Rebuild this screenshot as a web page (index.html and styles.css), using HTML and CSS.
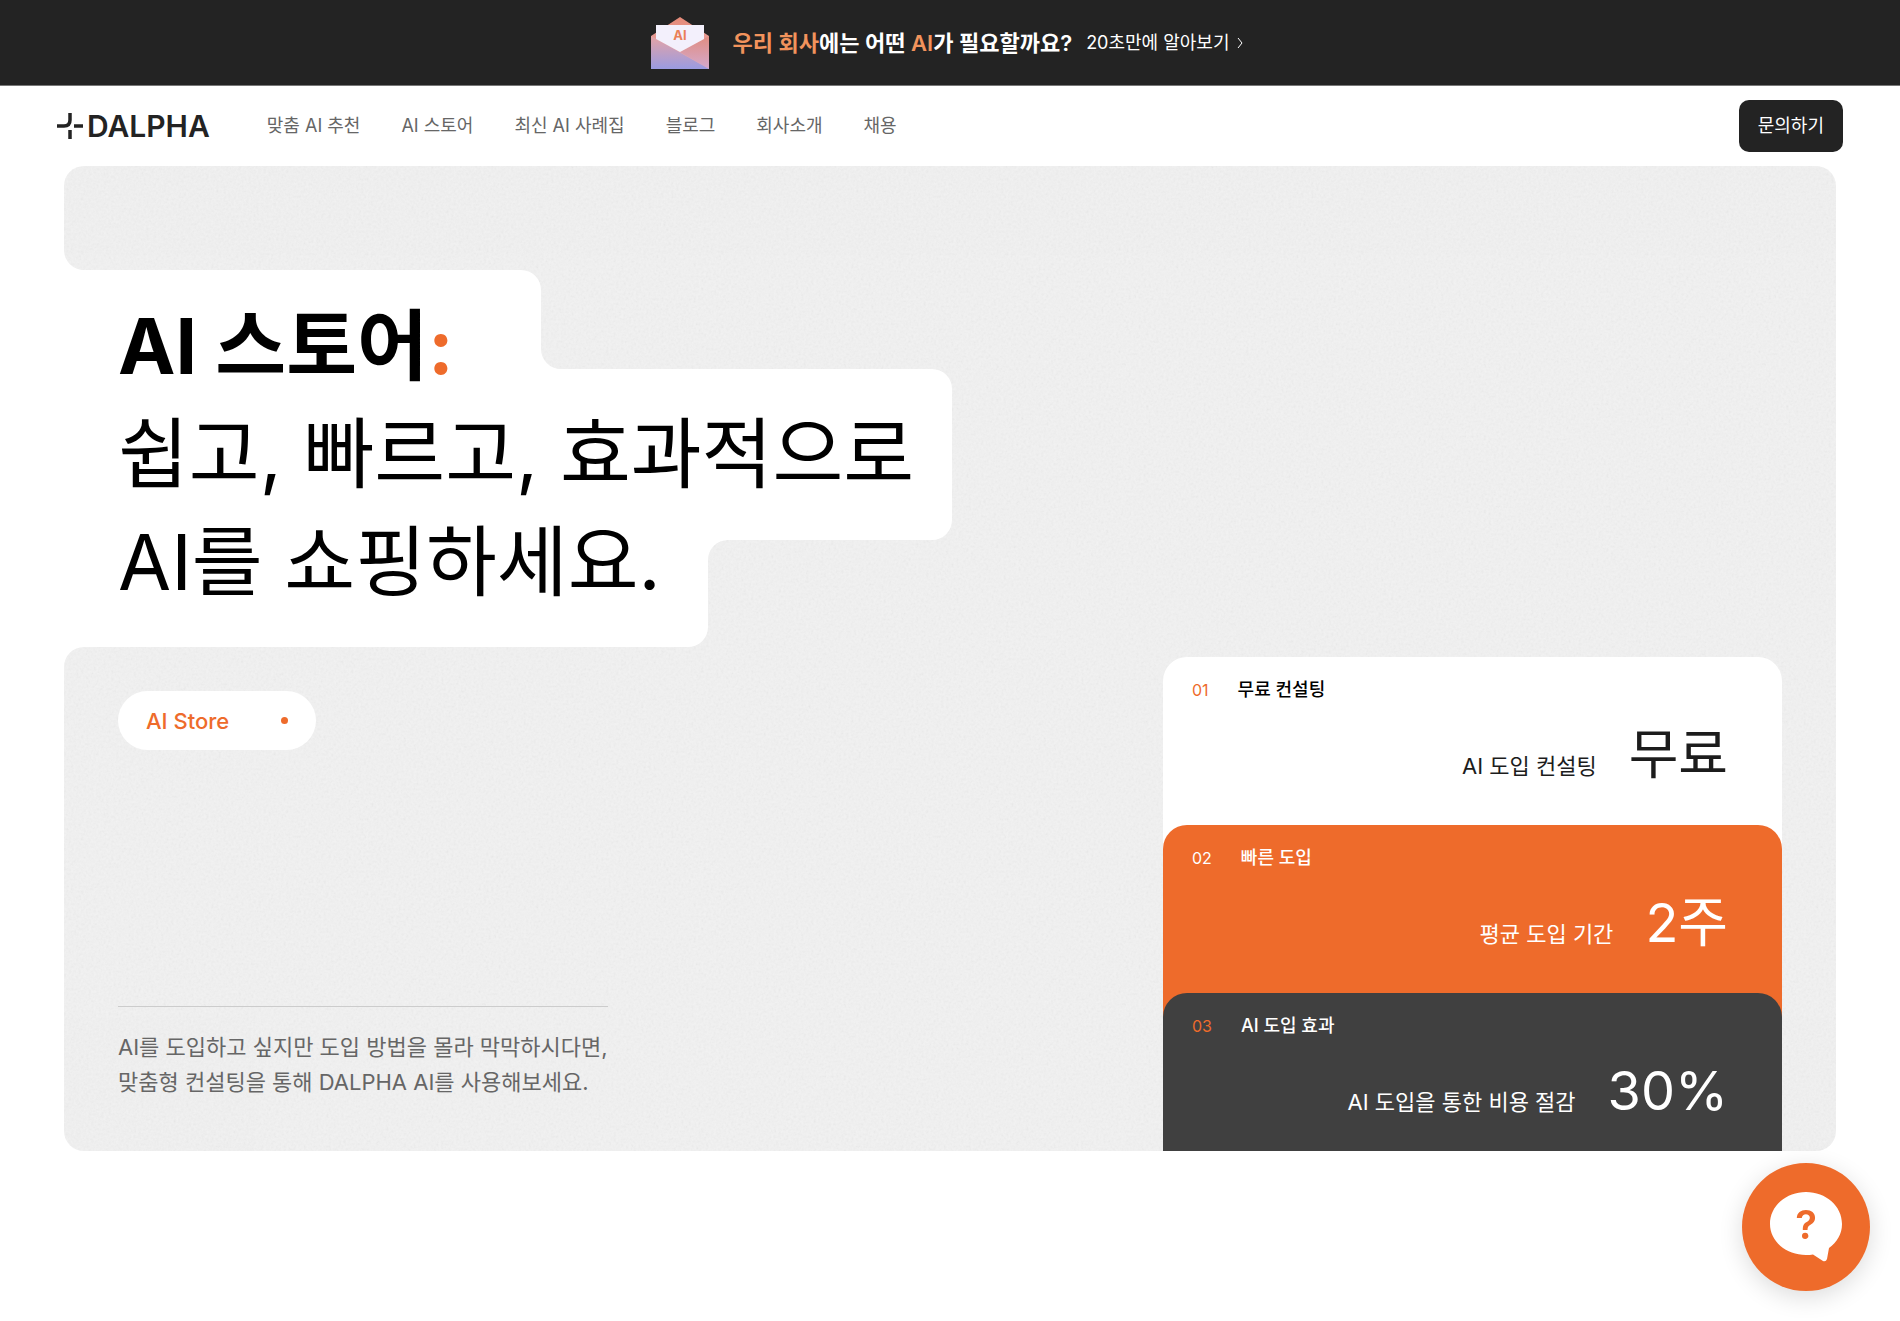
FILE: index.html
```html
<!DOCTYPE html>
<html lang="ko">
<head>
  <meta charset="utf-8">
  <meta name="viewport" content="width=device-width, initial-scale=1">
  <title>DALPHA | AI 스토어</title>
  <link rel="stylesheet" href="styles.css">
</head>
<body>
  <a class="banner" href="#recommend">
    <svg class="banner-icon" viewBox="0 0 58 52" aria-hidden="true">
      <defs>
        <linearGradient id="flap" x1="0" y1="0" x2="0" y2="1">
          <stop offset="0" stop-color="#e58a78"/><stop offset="1" stop-color="#e9b3bd"/>
        </linearGradient>
        <linearGradient id="front" x1="0" y1="0" x2="0" y2="1">
          <stop offset="0" stop-color="#e6a3a4"/><stop offset="1" stop-color="#9a9be2"/>
        </linearGradient>
        <linearGradient id="side" x1="0" y1="0" x2="0" y2="1">
          <stop offset="0" stop-color="#e08c80"/><stop offset="1" stop-color="#d5aacd"/>
        </linearGradient>
      </defs>
      <path d="M29 0 58 19V52H0V19Z" fill="url(#flap)"/>
      <path d="M58 19V52L29 35Z" fill="url(#side)"/>
      <path d="M0 19 58 52H0Z" fill="url(#front)"/>
      <path d="M5 8H53V22L29 35 5 22Z" fill="#f3f0fc"/>
      <text x="29" y="23" text-anchor="middle" class="banner-icon-text">AI</text>
    </svg>
    <strong class="banner-title"><em>우리 회사</em>에는 어떤 <em>AI</em>가 필요할까요?</strong>
    <span class="banner-more">20초만에 알아보기
      <svg class="chevron" viewBox="0 0 6 12" aria-hidden="true"><path d="M1 1 5 6 1 11"/></svg>
    </span>
  </a>

  <header class="header">
    <a class="logo" href="#home">
      <svg class="logo-mark" viewBox="0 0 26 26" aria-hidden="true">
        <path d="M13 0V7Q13 13 7 13H0M17 13H26M13 17V26"/>
      </svg>
      <span>DALPHA</span>
    </a>
    <nav class="nav">
      <a href="#recommend">맞춤 AI 추천</a>
      <a href="#store">AI 스토어</a>
      <a href="#cases">최신 AI 사례집</a>
      <a href="#blog">블로그</a>
      <a href="#company">회사소개</a>
      <a href="#careers">채용</a>
    </nav>
    <button class="contact" type="button">문의하기</button>
  </header>

  <main class="hero">
    <svg class="grain" aria-hidden="true">
      <filter id="noise"><feTurbulence type="fractalNoise" baseFrequency="0.4" numOctaves="2"/><feColorMatrix type="saturate" values="0"/></filter>
      <rect width="100%" height="100%" filter="url(#noise)"/>
    </svg>
    <div class="headline">
      <svg class="headline-shape" viewBox="0 0 888 417" aria-hidden="true">
        <path d="M0 0A20 20 0 0 0 20 20H457A20 20 0 0 1 477 40V99A20 20 0 0 0 497 119H868A20 20 0 0 1 888 139V270A20 20 0 0 1 868 290H664A20 20 0 0 0 644 310V377A20 20 0 0 1 624 397H20A20 20 0 0 0 0 417Z"/>
      </svg>
      <h1 class="headline-text"><strong>AI 스토어<span class="accent">:</span></strong><br>쉽고, 빠르고, 효과적으로<br>AI를 쇼핑하세요.</h1>
    </div>
    <div class="hero-body">
      <div class="intro">
        <a class="pill" href="#store">AI Store<span class="pill-dot"></span></a>
        <p class="description">AI를 도입하고 싶지만 도입 방법을 몰라 막막하시다면,<br>맞춤형 컨설팅을 통해 DALPHA AI를 사용해보세요.</p>
      </div>
      <div class="cards">
        <section class="card card-white">
          <h2 class="card-head"><span class="card-number">01</span>무료 컨설팅</h2>
          <p class="card-stat"><span>AI 도입 컨설팅</span><span class="card-value">무료</span></p>
        </section>
        <section class="card card-orange">
          <h2 class="card-head"><span class="card-number">02</span>빠른 도입</h2>
          <p class="card-stat"><span>평균 도입 기간</span><span class="card-value">2주</span></p>
        </section>
        <section class="card card-dark">
          <h2 class="card-head"><span class="card-number">03</span>AI 도입 효과</h2>
          <p class="card-stat"><span>AI 도입을 통한 비용 절감</span><span class="card-value">30%</span></p>
        </section>
      </div>
    </div>
  </main>

  <button class="chat" type="button" aria-label="채팅 문의">
    <svg viewBox="0 0 72 70" aria-hidden="true">
      <path d="M36 0C56 0 72 14 72 32C72 42 67 50 59 56L57 67Q56 70 53 69L43 62.500Q40 63 36 63C16 63 0 49 0 32C0 14 16 0 36 0Z"/>
      <text x="36" y="47" text-anchor="middle">?</text>
    </svg>
  </button>
</body>
</html>
```
FILE: styles.css
```css
:root {
  --orange: #ee6b2b;
  --dark: #232323;
  --radius: 20px;
}

* {
  box-sizing: border-box;
}

body {
  margin: 0;
  min-height: 100vh;
  background: #fff;
  color: #000;
  font-family: Inter, "Noto Sans CJK KR", sans-serif;
}

a {
  color: inherit;
  text-decoration: none;
}

button {
  border: 0;
  font: inherit;
  cursor: pointer;
}

h1,
h2,
p {
  margin: 0;
  font-weight: 400;
}

/* Announcement */
.banner {
  display: flex;
  align-items: center;
  justify-content: center;
  height: 86px;
  border-bottom: 1px solid #777;
  background: var(--dark);
  color: #fff;
  line-height: 24px;
}

.banner-icon {
  width: 58px;
  height: 52px;
  margin-right: 24px;
}

.banner-icon-text {
  fill: #ea8058;
  font-size: 13px;
  font-weight: 700;
}

.banner-title {
  margin-right: 14px;
  font-size: 22px;
  font-weight: 600;
}

.banner-title em {
  color: #f2935c;
  font-style: normal;
}

.banner-more {
  display: flex;
  align-items: center;
  gap: 8px;
  margin-right: 6px;
  font-size: 18px;
}

.chevron {
  width: 6px;
  height: 12px;
  fill: none;
  stroke: #fff;
}

/* Header */
.header {
  display: flex;
  align-items: center;
  height: 80px;
  padding: 0 57px;
  line-height: 24px;
}

.logo {
  display: flex;
  align-items: center;
  gap: 4px;
  margin-right: 57px;
  color: var(--dark);
  font-size: 30px;
  font-weight: 600;
}

.logo-mark {
  width: 26px;
  height: 26px;
  fill: none;
  stroke: var(--dark);
  stroke-width: 3.500;
}

.nav {
  display: flex;
  gap: 41px;
  color: #666;
  font-size: 18px;
}

.contact {
  height: 52px;
  margin-left: auto;
  padding: 0 19px;
  border-radius: 10px;
  background: var(--dark);
  color: #fff;
  font-size: 18px;
}

/* Hero */
.hero {
  position: relative;
  margin: 0 64px;
  padding-top: 104px;
  overflow: hidden;
  border-radius: var(--radius);
  background: #f2f2f2;
}

.grain {
  position: absolute;
  inset: 0;
  width: 100%;
  height: 100%;
  opacity: 0.12;
}

.headline {
  position: relative;
  padding: 22px 0 31px 54px;
}

.headline-shape {
  position: absolute;
  top: -20px;
  left: 0;
  width: 888px;
  height: 417px;
  fill: #fff;
}

.headline-text {
  position: relative;
  font-size: 77px;
  line-height: 108px;
}

.headline-text strong {
  font-weight: 700;
}

.accent {
  color: var(--orange);
}

.hero-body {
  position: relative;
  display: flex;
  justify-content: space-between;
  padding: 10px 54px 0;
}

.intro {
  display: flex;
  flex-direction: column;
  align-items: flex-start;
  justify-content: space-between;
  padding: 34px 0 51px;
}

.pill {
  display: flex;
  align-items: center;
  justify-content: space-between;
  width: 198px;
  height: 59px;
  padding: 0 28px;
  border-radius: 30px;
  background: #fff;
  color: var(--orange);
  font-size: 22px;
  font-weight: 500;
}

.pill-dot {
  width: 7px;
  height: 7px;
  border-radius: 50%;
  background: var(--orange);
}

.description {
  padding-top: 23px;
  border-top: 1px solid #ccc;
  color: #666;
  font-size: 22px;
  line-height: 35px;
}

.cards {
  width: 619px;
}

.card {
  position: relative;
  height: 192px;
  padding: 20px 54px 0 29px;
  border-radius: 24px 24px 0 0;
}

.card + .card {
  margin-top: -24px;
}

.card-head {
  display: flex;
  align-items: center;
  gap: 29px;
  font-size: 18px;
  font-weight: 500;
  line-height: 26px;
}

.card-number {
  font-size: 16px;
  font-weight: 400;
}

.card-stat {
  display: flex;
  align-items: baseline;
  justify-content: flex-end;
  gap: 32px;
  padding-top: 16px;
  font-size: 22px;
  line-height: 72px;
}

.card-value {
  font-size: 54px;
}

.card-white {
  background: #fff;
}

.card-white .card-stat {
  color: #1c1c1c;
}

.card-white .card-number,
.card-dark .card-number {
  color: var(--orange);
}

.card-orange {
  background: var(--orange);
  color: #fff;
}

.card-dark {
  height: 158px;
  background: #404040;
  color: #fff;
}

/* Floating chat button */
.chat {
  position: fixed;
  right: 30px;
  bottom: 30px;
  display: flex;
  align-items: flex-start;
  justify-content: center;
  width: 128px;
  height: 128px;
  padding: 29px 0 0;
  border-radius: 50%;
  background: var(--orange);
  box-shadow: 0 6px 24px rgb(0 0 0 / 14%);
}

.chat svg {
  width: 72px;
  height: 70px;
  fill: #fff;
}

.chat text {
  fill: var(--orange);
  font-size: 40px;
  font-weight: 600;
}
```
